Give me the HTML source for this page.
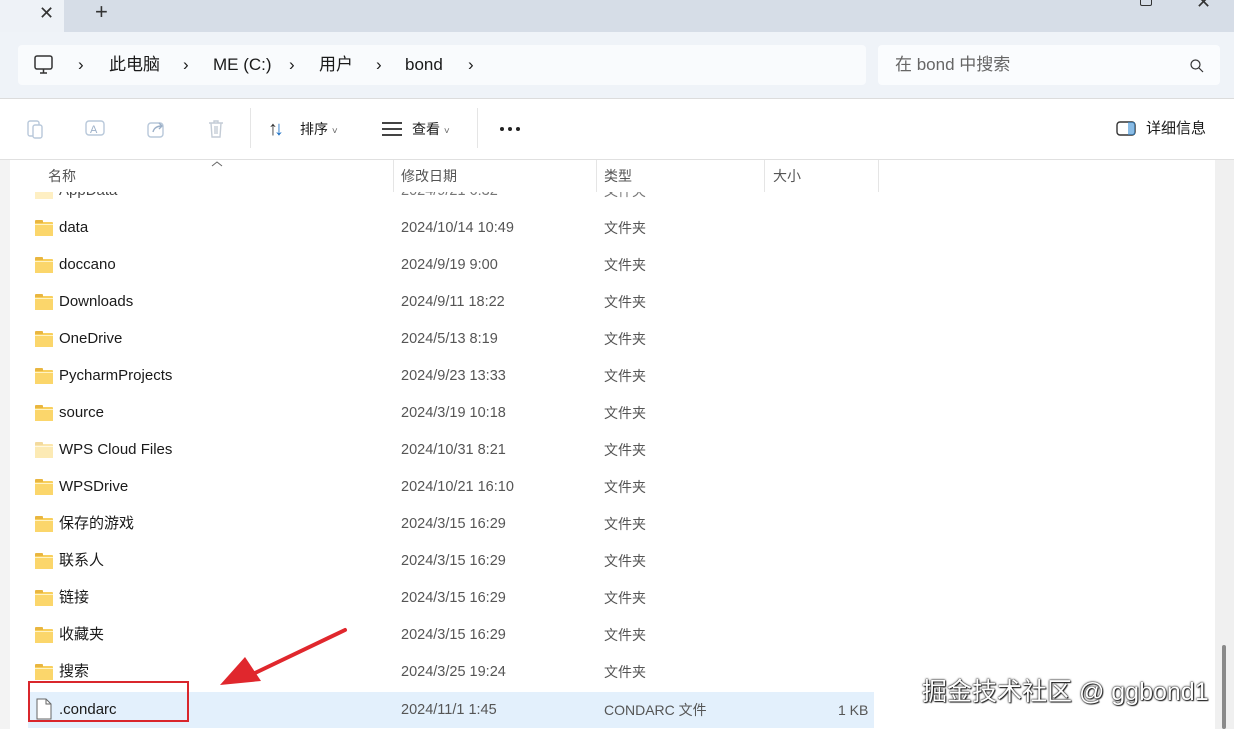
<!DOCTYPE html><html><head><meta charset="utf-8"><style>
*{margin:0;padding:0;box-sizing:border-box}
body{width:1234px;height:729px;overflow:hidden;background:#fff;font-family:"Liberation Sans","Noto Sans CJK SC",sans-serif;position:relative;color:#1a1a1a;line-height:20px}
.a{position:absolute;white-space:nowrap;line-height:20px}
.row{position:absolute;left:28px;width:846px;height:36px;line-height:36px}
.row div{line-height:36px}
.row .n{position:absolute;left:31px;top:0;font-size:15px;color:#1a1a1a}
.row .d{position:absolute;left:373px;top:0;font-size:14.5px;color:#555}
.row .t{position:absolute;left:576px;top:0;font-size:14px;color:#555}
.fold{position:absolute;left:7px;top:12px;width:18px;height:13px;background:#f8cf5c;border-radius:1px}
.fold:before{content:"";position:absolute;left:0;top:-2px;width:8px;height:3px;background:#e9b640;border-radius:1px 1px 0 0}
.fold:after{content:"";position:absolute;left:0;top:2px;width:18px;height:11px;background:#fbd66b;border-top:1px solid #fff3c4}
</style></head><body>
<div class="a" style="left:0;top:0;width:1234px;height:32px;background:#d6dde7"></div>
<div class="a" style="left:0;top:0;width:64px;height:32px;background:#eef2f7"></div>
<div class="a" style="left:39px;top:3px;font-size:18px;color:#333">✕</div>
<div class="a" style="left:95px;top:2px;font-size:22px;color:#333">+</div>
<div class="a" style="left:1140px;top:-6px;width:12px;height:12px;border:1.5px solid #333;border-radius:2px"></div>
<div class="a" style="left:1196px;top:-8px;font-size:18px;color:#333">✕</div>
<div class="a" style="left:0;top:32px;width:1234px;height:66px;background:#eff3f8"></div>
<div class="a" style="left:18px;top:45px;width:848px;height:40px;background:#f9fbfd;border-radius:4px"></div>
<div class="a" style="left:878px;top:45px;width:342px;height:40px;background:#fafcfe;border-radius:4px"></div>
<svg class="a" style="left:33px;top:54px" width="22" height="22" viewBox="0 0 22 22"><rect x="2" y="2" width="17" height="13" rx="2" fill="none" stroke="#333" stroke-width="1.5"/><path d="M7 19h7M10.5 15v4" stroke="#333" stroke-width="1.5"/></svg>
<div class="a" style="left:0;top:55px;font-size:17px;color:#1a1a1a">
<span class="a" style="left:78px;top:0">›</span><span class="a" style="left:109px;top:0">此电脑</span><span class="a" style="left:183px;top:0">›</span><span class="a" style="left:213px;top:0">ME (C:)</span><span class="a" style="left:289px;top:0">›</span><span class="a" style="left:319px;top:0">用户</span><span class="a" style="left:376px;top:0">›</span><span class="a" style="left:405px;top:0">bond</span><span class="a" style="left:468px;top:0">›</span></div>
<div class="a" style="left:895px;top:55px;font-size:17px;color:#666">在 bond 中搜索</div>
<svg class="a" style="left:1189px;top:58px" width="16" height="16"><circle cx="6.5" cy="6.5" r="4.5" fill="none" stroke="#333" stroke-width="1.2"/><path d="M10 10l4 4" stroke="#333" stroke-width="1.2"/></svg>
<div class="a" style="left:0;top:98px;width:1234px;height:1px;background:#dcdcdc"></div>
<div class="a" style="left:0;top:159px;width:1234px;height:1px;background:#e0e0e0"></div>
<div class="a" style="left:250px;top:108px;width:1px;height:40px;background:#e5e5e5"></div>
<div class="a" style="left:477px;top:108px;width:1px;height:40px;background:#e5e5e5"></div>
<svg class="a" style="left:26px;top:118px" width="22" height="22"><rect x="2" y="3" width="11" height="15" rx="2" fill="none" stroke="#b8c8da" stroke-width="1.4"/><rect x="7" y="7" width="9" height="13" rx="2" fill="#fff" stroke="#b8c8da" stroke-width="1.4"/></svg>
<svg class="a" style="left:85px;top:118px" width="22" height="22"><rect x="1" y="3" width="18" height="14" rx="3" fill="none" stroke="#b8c8da" stroke-width="1.4"/><text x="5" y="15" font-size="11" fill="#9cb0c8" font-family="Liberation Sans">A</text></svg>
<svg class="a" style="left:146px;top:118px" width="22" height="22"><rect x="2" y="5" width="15" height="14" rx="3" fill="none" stroke="#b8c8da" stroke-width="1.4"/><path d="M7 14c1-4 4-6 9-6M13 5l3 3-3 3" fill="none" stroke="#9cb0c8" stroke-width="1.4"/></svg>
<svg class="a" style="left:206px;top:118px" width="22" height="22"><path d="M3 5h14M8 5V3h4v2M5 5l1 14h8l1-14M9 8v8M11 8v8" fill="none" stroke="#c4ccd6" stroke-width="1.4"/></svg>
<div class="a" style="left:268px;top:119px;font-size:20px;color:#333;letter-spacing:-4px">↑<span style="color:#1a6fc4">↓</span></div>
<div class="a" style="left:300px;top:119px;font-size:14px">排序 <span style="font-size:10px;color:#666">˅</span></div>
<div class="a" style="left:382px;top:122px;width:20px;height:14px;border-top:2px solid #444;border-bottom:2px solid #444"></div><div class="a" style="left:382px;top:128px;width:20px;height:2px;background:#444"></div>
<div class="a" style="left:412px;top:119px;font-size:14px">查看 <span style="font-size:10px;color:#666">˅</span></div>
<div class="a" style="left:500px;top:127px;width:4px;height:4px;border-radius:2px;background:#222"></div>
<div class="a" style="left:508px;top:127px;width:4px;height:4px;border-radius:2px;background:#222"></div>
<div class="a" style="left:516px;top:127px;width:4px;height:4px;border-radius:2px;background:#222"></div>
<svg class="a" style="left:1116px;top:120px" width="22" height="18"><rect x="1" y="2" width="18" height="13" rx="3" fill="none" stroke="#333" stroke-width="1.4"/><rect x="12" y="2" width="7" height="13" fill="#3b8fd6" opacity=".6"/></svg>
<div class="a" style="left:1146px;top:119px;font-size:15px">详细信息</div>
<div class="a" style="left:0;top:160px;width:10px;height:569px;background:#f3f3f3"></div>
<div class="a" style="left:1215px;top:160px;width:19px;height:569px;background:#f0f0f0"></div>
<div class="a" style="left:1222px;top:645px;width:4px;height:84px;background:#8a8a8a;border-radius:2px"></div>
<div class="a" style="left:393px;top:160px;width:1px;height:32px;background:#e5e5e5"></div>
<div class="a" style="left:596px;top:160px;width:1px;height:32px;background:#e5e5e5"></div>
<div class="a" style="left:764px;top:160px;width:1px;height:32px;background:#e5e5e5"></div>
<div class="a" style="left:878px;top:160px;width:1px;height:32px;background:#e5e5e5"></div>
<svg class="a" style="left:211px;top:160px" width="12" height="7"><path d="M1 6l5-4 5 4" fill="none" stroke="#666" stroke-width="1"/></svg>
<div class="a" style="left:48px;top:166px;font-size:14px;color:#555">名称</div>
<div class="a" style="left:401px;top:166px;font-size:14px;color:#555">修改日期</div>
<div class="a" style="left:604px;top:166px;font-size:14px;color:#555">类型</div>
<div class="a" style="left:773px;top:166px;font-size:14px;color:#555">大小</div>
<div style="position:absolute;left:0;top:192px;width:1215px;height:537px;overflow:hidden">
<div class="row" style="top:-19px;opacity:.8"><div class="fold" style="opacity:.5"></div><div class="n">AppData</div><div class="d">2024/9/21 6:32</div><div class="t">文件夹</div></div>
<div class="row" style="top:18px"><div class="fold"></div><div class="n">data</div><div class="d">2024/10/14 10:49</div><div class="t">文件夹</div></div>
<div class="row" style="top:55px"><div class="fold"></div><div class="n">doccano</div><div class="d">2024/9/19 9:00</div><div class="t">文件夹</div></div>
<div class="row" style="top:92px"><div class="fold"></div><div class="n">Downloads</div><div class="d">2024/9/11 18:22</div><div class="t">文件夹</div></div>
<div class="row" style="top:129px"><div class="fold"></div><div class="n">OneDrive</div><div class="d">2024/5/13 8:19</div><div class="t">文件夹</div></div>
<div class="row" style="top:166px"><div class="fold"></div><div class="n">PycharmProjects</div><div class="d">2024/9/23 13:33</div><div class="t">文件夹</div></div>
<div class="row" style="top:203px"><div class="fold"></div><div class="n">source</div><div class="d">2024/3/19 10:18</div><div class="t">文件夹</div></div>
<div class="row" style="top:240px"><div class="fold" style="opacity:.5"></div><div class="n">WPS Cloud Files</div><div class="d">2024/10/31 8:21</div><div class="t">文件夹</div></div>
<div class="row" style="top:277px"><div class="fold"></div><div class="n">WPSDrive</div><div class="d">2024/10/21 16:10</div><div class="t">文件夹</div></div>
<div class="row" style="top:314px"><div class="fold"></div><div class="n">保存的游戏</div><div class="d">2024/3/15 16:29</div><div class="t">文件夹</div></div>
<div class="row" style="top:351px"><div class="fold"></div><div class="n">联系人</div><div class="d">2024/3/15 16:29</div><div class="t">文件夹</div></div>
<div class="row" style="top:388px"><div class="fold"></div><div class="n">链接</div><div class="d">2024/3/15 16:29</div><div class="t">文件夹</div></div>
<div class="row" style="top:425px"><div class="fold"></div><div class="n">收藏夹</div><div class="d">2024/3/15 16:29</div><div class="t">文件夹</div></div>
<div class="row" style="top:462px"><div class="fold"></div><div class="n">搜索</div><div class="d">2024/3/25 19:24</div><div class="t">文件夹</div></div>
<div class="row" style="top:500px;background:#e3f0fc"><svg style="position:absolute;left:8px;top:6px" width="16" height="22"><path d="M1 1h9l5 5v15H1z" fill="#fff" stroke="#666" stroke-width="1"/><path d="M10 1v5h5" fill="none" stroke="#666"/></svg><div class="n">.condarc</div><div class="d">2024/11/1 1:45</div><div class="t">CONDARC 文件</div><div class="t" style="left:810px">1 KB</div></div>
</div>
<div class="a" style="left:28px;top:681px;width:161px;height:41px;border:2px solid #d9262c"></div>
<svg class="a" style="left:215px;top:625px" width="135" height="65"><path d="M130 5L40 48" stroke="#e0272d" stroke-width="4" stroke-linecap="round"/><path d="M5 60L30 32L46 56z" fill="#e0272d"/></svg>
<div class="a" style="left:922px;top:676px;font-size:25px;line-height:32px;color:#fff;text-shadow:0 0 2px #000,0 0 1px #000,1px 1px 1px #333">掘金技术社区 @ ggbond1</div>
</body></html>
